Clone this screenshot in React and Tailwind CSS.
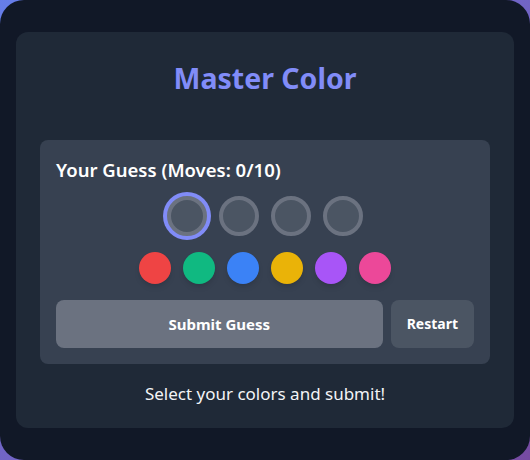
import React, { useState } from 'react'

const COLORS = [
  'bg-[#ef4444]',
  'bg-[#10b981]',
  'bg-[#3b82f6]',
  'bg-[#eab308]',
  'bg-[#a855f7]',
  'bg-[#ec4899]',
]

const App = () => {
  const [guess, setGuess] = useState([null, null, null, null])
  const [active, setActive] = useState(0)

  const pick = (c) => {
    const next = [...guess]
    next[active] = c
    setGuess(next)
    setActive(Math.min(active + 1, 3))
  }

  return (
    <div className="min-h-screen bg-linear-to-br from-[#667eea] to-[#764ba2]">
      <div
        className="min-h-screen bg-[#111827] rounded-3xl px-4 py-8"
        style={{ fontFamily: '"Noto Sans", "Open Sans", sans-serif' }}
      >
        <div className="bg-[#1f2937] rounded-xl pt-6 px-6 pb-5">
          <h1 className="text-[28.5px] leading-9 pt-1 font-bold text-center text-[#818cf8] mb-11">Master Color</h1>

          <div className="bg-[#374151] rounded-lg p-4">
            <h2 className="text-[18.5px] leading-7 font-semibold text-white mb-3">Your Guess (Moves: 0/10)</h2>

            <div className="flex justify-center gap-3 mb-4">
              {guess.map((g, i) => (
                <button
                  key={i}
                  onClick={() => setActive(i)}
                  className={`w-10 h-10 rounded-full border-4 border-[#6b7280] ${g || 'bg-[#4b5563]'} ${
                    i === active ? 'ring-4 ring-[#818cf8]' : ''
                  }`}
                />
              ))}
            </div>

            <div className="flex justify-center gap-3 mb-4">
              {COLORS.map((c) => (
                <button key={c} onClick={() => pick(c)} className={`w-8 h-8 rounded-full shadow-md ${c}`} />
              ))}
            </div>

            <div className="flex gap-2">
              <button className="flex-1 bg-[#6b7280] text-white text-[15px] leading-5 font-bold py-3.5 rounded-lg">
                Submit Guess
              </button>
              <button
                onClick={() => {
                  setGuess([null, null, null, null])
                  setActive(0)
                }}
                className="bg-[#4b5563] text-white text-sm font-bold px-4 py-3.5 rounded-lg"
              >
                Restart
              </button>
            </div>
          </div>

          <p className="text-[17px] leading-7 text-center text-gray-100 mt-4">Select your colors and submit!</p>
        </div>
      </div>
    </div>
  )
}

export default App
